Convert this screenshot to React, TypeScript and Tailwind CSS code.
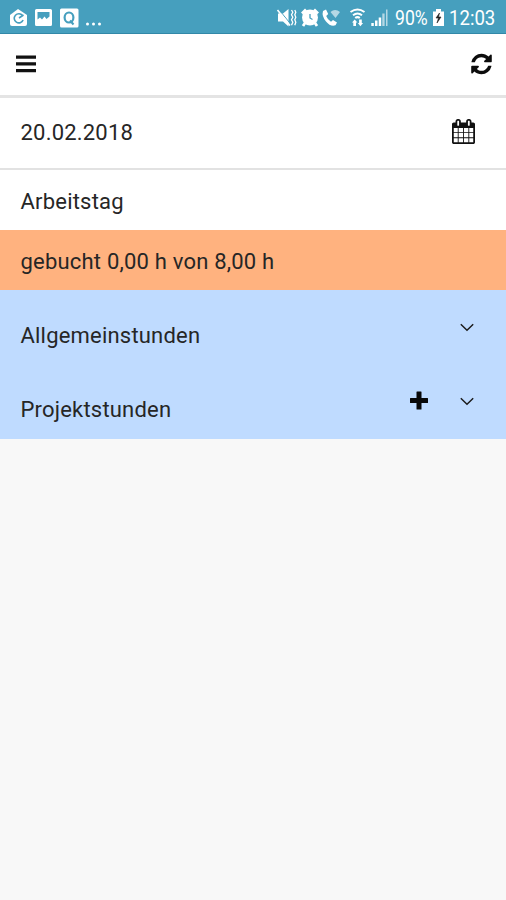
import React from "react";

const label = "text-[22px] leading-[26px] tracking-[0.2px] text-[#262626] whitespace-nowrap";

function StatusBar() {
  return (
    <div className="flex h-[34px] items-center border-b border-[#3288a8] bg-[#469fbe] text-white">
      <svg width="110" height="33" viewBox="0 0 110 33" fill="currentColor">
        <path d="M10 15l8-6 9 6v9q0 2-2 2H12q-2 0-2-2z" />
        <path d="M22.500 15.500a4.600 4.600 0 1 0 .600 4.500M19 18l4.500-3" fill="none" stroke="#469fbe" strokeWidth="1.600" />
        <path fillRule="evenodd" d="M36.500 9h14q1.500 0 1.500 1.500v14q0 1.500-1.500 1.500h-14q-1.500 0-1.500-1.500v-14q0-1.500 1.500-1.500zM37.500 12v7.500l2.500-2 2 2 2.500-3 2 2.500 3-2.500v-4.500z" />
        <rect x="60" y="8.500" width="18.500" height="19" rx="1.500" />
        <ellipse cx="69" cy="17.500" rx="4.400" ry="5" fill="none" stroke="#469fbe" strokeWidth="2.200" />
        <path d="M70 20.500l3.500 4" stroke="#469fbe" strokeWidth="2" />
        <circle cx="87.500" cy="24" r="1.500" /><circle cx="93.500" cy="24" r="1.500" /><circle cx="99.500" cy="24" r="1.500" />
      </svg>
      <svg className="ml-[160px] shrink-0" width="122" height="33" viewBox="270 0 122 33" fill="currentColor">
        <path d="M278 13.500h5l5.500-4.500v17.500l-5.500-5H278z" />
        <path d="M278.500 9l12.500 15.500" stroke="#469fbe" strokeWidth="1" />
        <path d="M277.500 10l12.500 15.500" stroke="white" strokeWidth="1.600" />
        <path d="M291.500 10l1.300 2.200-1.300 2.500 1.300 2.500-1.300 2.500 1.300 2.500-1.300 3M294.800 10l1 2.200-1 2.500 1 2.500-1 2.500 1 2.500-1 3" fill="none" stroke="white" strokeWidth="1.300" />
        <circle cx="310" cy="17.500" r="8" />
        <path d="M302 13.500l4-4M314 9.500l4 4M305 23l-2 3M315 23l2 3" stroke="white" strokeWidth="2.800" />
        <path d="M310 14v4l2.500 1.500" fill="none" stroke="#469fbe" strokeWidth="1.300" />
        <path d="M323 11l3-1.500 2.200 4.500-2 2q1.500 4 4.800 5.700l2-1.700 4 2.500-1.500 2.800q-5 1.700-9.500-3.800t-3-10.500z" />
        <path d="M330.500 12q4.500-4 9.500 0l-4.500 6z" opacity=".6" />
        <g fill="none" stroke="currentColor" strokeWidth="2">
          <path d="M350.500 12q7-5 14 0M353 15.200q4.500-3.500 9 0" />
          <path d="M355.200 18q2.300-1.800 4.600 0" />
        </g>
        <path d="M352 22.500l2.700-3 2.700 3H356V26h-2.700v-3.500zM357.800 23h1.300v-3.500h2.700V23h1.300l-2.700 3.200z" />
        <path d="M371.300 23h2.500v3h-2.500zM375 20.500h2.500V26H375zM378.700 17.500h2.500V26h-2.500z" />
        <path d="M382.300 13.500h2.300V26h-2.300zM386 9.500h1.500V26H386z" opacity=".6" />
      </svg>
      <span className="ml-[3px] w-[35px] shrink-0 text-[20px] leading-[33px]"><span className="inline-block origin-left scale-x-[0.88] pt-[3px]">90%</span></span>
      <svg className="ml-[3px] shrink-0" width="11" height="33" viewBox="0 0 11 33">
        <path d="M0 11.500h3V9h5v2.500h3V26H0z" fill="white" />
        <path d="M6.500 13L3 18h2.500L4 23l4-6H5.500z" fill="#222" stroke="#222" strokeWidth=".6" />
      </svg>
      <span className="ml-[5px] shrink-0 text-[20px] leading-[33px]"><span className="inline-block origin-left scale-x-[0.93] pt-[3px]">12:03</span></span>
    </div>
  );
}

function Chevron() {
  return (
    <svg width="14" height="9" viewBox="0 0 14 9" fill="none" stroke="#1c1c1c" strokeWidth="1.500">
      <path d="M.8 1.200L7 7.200l6.200-6" />
    </svg>
  );
}

export default function App() {
  return (
    <main className="flex h-[900px] w-[506px] flex-col overflow-hidden bg-[#f8f8f8] font-[Roboto,sans-serif]">
      <StatusBar />
      <header className="flex h-[64px] items-center justify-between border-b-[3px] border-[#e4e4e4] bg-white pr-[14px] pb-[2px] pl-4">
        <svg width="20" height="18" viewBox="0 0 20 18" fill="#111">
          <path d="M0 .5h20v3.200H0zM0 7.300h20v3.200H0zM0 14.100h20v3.200H0z" />
        </svg>
        <svg width="21" height="24" viewBox="0 0 1536 1792" fill="#0c0c0c">
          <path d="M1511 1056q0 5-1 7-64 268-268 434.500t-478 166.500q-146 0-282.500-55t-243.500-157l-129 129q-19 19-45 19t-45-19-19-45v-448q0-26 19-45t45-19h448q26 0 45 19t19 45-19 45l-137 137q71 66 161 102t187 36q134 0 250-65t186-179q11-17 53-117 8-23 30-23h192q13 0 22.500 9.500t9.500 22.500zm25-800v448q0 26-19 45t-45 19h-448q-26 0-45-19t-19-45 19-45l138-138q-148-137-349-137-134 0-250 65t-186 179q-11 17-53 117-8 23-30 23h-199q-13 0-22.500-9.500t-9.500-22.500v-7q65-268 270-434.500t480-166.500q146 0 284 55.500t245 156.500l130-129q19-19 45-19t45 19 19 45z" />
        </svg>
      </header>
      <section className="flex h-[72px] items-center justify-between border-b-2 border-[#e2e2e2] bg-white pr-[31px] pl-[20.500px]">
        <span className={label}>20.02.2018</span>
        <svg className="-mt-[3px]" width="23" height="25" viewBox="64 0 1664 1792" preserveAspectRatio="none" fill="#111">
          <path d="M192 1664h288v-288h-288v288zm352 0h320v-288h-320v288zm-352-352h288v-320h-288v320zm352 0h320v-320h-320v320zm-352-384h288v-288h-288v288zm736 736h320v-288h-320v288zm-384-736h320v-288h-320v288zm768 736h288v-288h-288v288zm-384-352h320v-320h-320v320zm-352-864v-288q0-13-9.500-22.500t-22.500-9.500h-64q-13 0-22.500 9.500t-9.500 22.500v288q0 13 9.500 22.500t22.500 9.500h64q13 0 22.500-9.500t9.500-22.500zm736 864h288v-320h-288v320zm-384-384h320v-288h-320v288zm384 0h288v-288h-288v288zm32-480v-288q0-13-9.500-22.500t-22.500-9.500h-64q-13 0-22.500 9.500t-9.500 22.500v288q0 13 9.500 22.500t22.500 9.500h64q13 0 22.500-9.500t9.500-22.500zm384-64v1280q0 52-38 90t-90 38h-1408q-52 0-90-38t-38-90v-1280q0-52 38-90t90-38h128v-96q0-66 47-113t113-47h64q66 0 113 47t47 113v96h384v-96q0-66 47-113t113-47h64q66 0 113 47t47 113v96h128q52 0 90 38t38 90z" />
        </svg>
      </section>
      <section className="flex h-[60px] items-center bg-white pt-[3px] pl-[20.500px]">
        <span className={label}>Arbeitstag</span>
      </section>
      <section className="flex h-[60px] items-center bg-[#ffb27f] pt-[3px] pl-[20.500px]">
        <span className={label}>gebucht 0,00 h von 8,00 h</span>
      </section>
      <section className="bg-[#bfdbff]">
        <div className="flex h-[75px] items-start justify-between pt-[33px] pr-8 pl-[20.500px]">
          <span className={label}>Allgemeinstunden</span>
          <Chevron />
        </div>
        <div className="flex h-[74px] items-start pt-[32px] pr-8 pl-[20.500px]">
          <span className={label}>Projektstunden</span>
          <svg className="-mt-[6px] mr-8 ml-auto" width="18" height="19" viewBox="0 0 18 19" fill="#080808">
            <path d="M7 .5h4q.5 0 .5.500v6h6q.5 0 .5.500v4q0 .5-.5.500h-6v6q0 .5-.5.500H7q-.5 0-.5-.5v-6H.5q-.5 0-.5-.5v-4q0-.5.5-.5h6V1Q6.500.5 7 .5z" />
          </svg>
          <Chevron />
        </div>
      </section>
    </main>
  );
}
